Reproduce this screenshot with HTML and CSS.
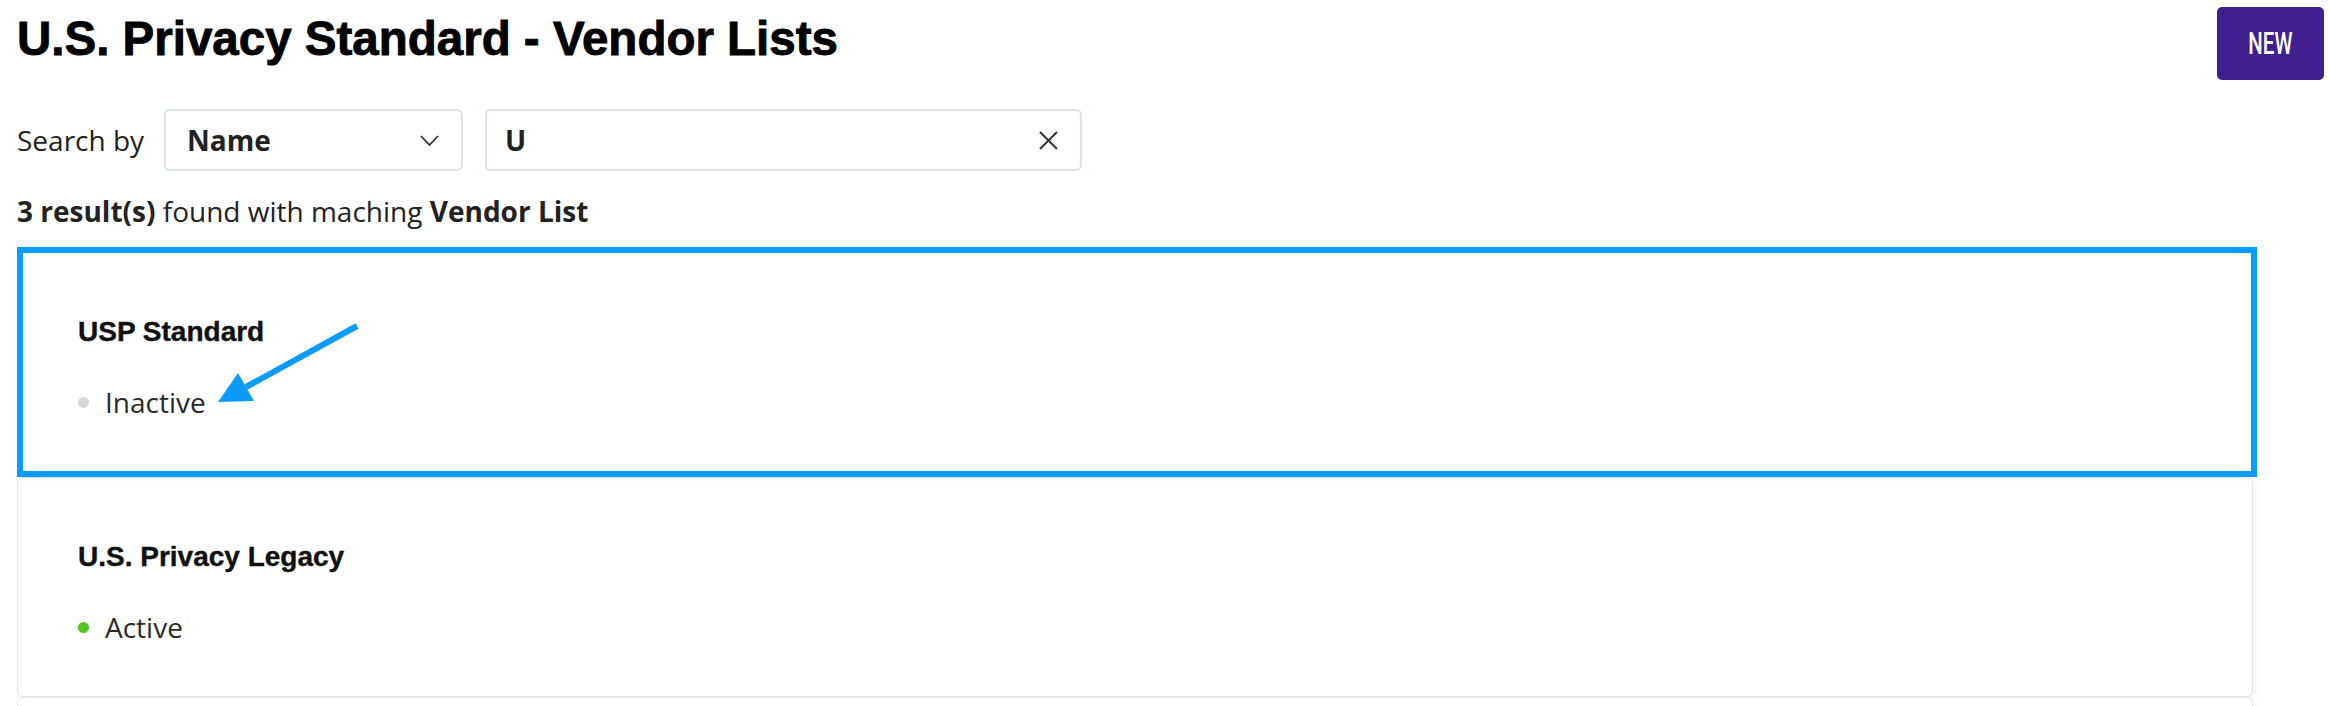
FILE: index.html
```
<!DOCTYPE html>
<html lang="en">
<head>
<meta charset="UTF-8">
<meta name="viewport" content="width=device-width, initial-scale=1.0">
<title>U.S. Privacy Standard - Vendor Lists</title>
<link rel="stylesheet" href="styles.css">
</head>
<body>
<div class="page">
  <div class="header">
    <h1 class="title">U.S. Privacy Standard - Vendor Lists</h1>
    <button class="btn-new"><span>NEW</span></button>
  </div>

  <div class="search-row">
    <span class="search-label">Search by</span>
    <div class="select-box">
      <span class="select-value">Name</span>
      <svg class="chevron" width="19" height="11" viewBox="0 0 19 11"><path d="M1 1 L9.5 10 L18 1" fill="none" stroke="#333" stroke-width="1.8"/></svg>
    </div>
    <div class="search-input">
      <span class="input-value">U</span>
      <svg class="clear" width="21" height="21" viewBox="0 0 21 21"><path d="M2 2 L19 19 M19 2 L2 19" fill="none" stroke="#333" stroke-width="2"/></svg>
    </div>
  </div>

  <p class="results"><b>3 result(s)</b> found with maching <b>Vendor List</b></p>

  <div class="list">
    <div class="card card-selected">
      <h3 class="card-title">USP Standard</h3>
      <div class="status"><span class="dot dot-inactive"></span>Inactive</div>
      <!-- annotation arrow -->
      <svg class="arrow" width="400" height="230" viewBox="0 0 400 230">
        <line x1="340" y1="79" x2="229" y2="140" stroke="#0b9bfd" stroke-width="6"/>
        <polygon points="201,155 237,154 221,126" fill="#0b9bfd"/>
      </svg>
    </div>
    <div class="card">
      <h3 class="card-title">U.S. Privacy Legacy</h3>
      <div class="status"><span class="dot dot-active"></span>Active</div>
    </div>
    <div class="card card-empty"></div>
  </div>
</div>
</body>
</html>
```

FILE: styles.css
```
body, html {
  margin: 0;
  padding: 0;
  background: #fff;
  overflow: hidden;
}
body {
  font-family: "Open Sans", "Liberation Sans", sans-serif;
  color: #222;
}
.page {
  padding: 0 6px 0 17px;
}
.header {
  display: flex;
  justify-content: space-between;
  align-items: flex-start;
}
.title {
  margin: 11px 0 0;
  font-family: "Liberation Sans", Arial, sans-serif;
  font-weight: 700;
  font-size: 47.5px;
  line-height: 56px;
  color: #000;
  -webkit-text-stroke: 0.9px #000; /* heavier, like the extrabold original */
}
.btn-new {
  margin-top: 7px;
  width: 107px;
  height: 73px;
  padding: 0;
  background-color: #411f8e;
  border: none;
  border-radius: 5px;
  color: white;
  font-family: Roboto, sans-serif;
  font-weight: 500;
  font-size: 31px;
  display: flex;
  align-items: center;
  justify-content: center;
}
.btn-new span {
  display: inline-block;
  transform: scaleX(0.66);
}

.search-row {
  display: flex;
  align-items: center;
  margin-top: 29px;
}
.search-label {
  font-size: 28px;
  line-height: 38px;
  margin-right: 20px;
}
.select-box, .search-input {
  box-sizing: border-box;
  height: 62px;
  border: 2px solid #dbe3eb;
  border-radius: 6px;
  display: flex;
  align-items: center;
  justify-content: space-between;
  font-size: 28px;
  font-weight: 700;
  color: #222;
}
.select-box {
  width: 299px;
  padding: 0 22px 0 21px;
}
.search-input {
  width: 597px;
  margin-left: 22px;
  padding: 0 21px 0 18px;
}

.results {
  margin: 21px 0 17px;
  font-size: 28px;
  line-height: 38px;
}

.list {
  margin: 0 71px 0 0;
}
.card {
  position: relative;
  border: 1px solid #e2e5eb;
  border-radius: 6px;
  padding: 63px 0 50px 60px;
  box-shadow: 3px 2px 6px rgba(0, 0, 0, 0.04);
  background: #fff;
}
.card-selected {
  border: 6px solid #0b9bfd;
  border-radius: 0;
  padding-left: 55px;
  margin-right: -4px;
  z-index: 1;
}
.card-empty {
  height: 120px;
  padding: 0;
}
.card-title {
  margin: 0 0 35px;
  font-family: "Liberation Sans", Arial, sans-serif;
  font-weight: 700;
  font-size: 28px;
  line-height: 32px;
  color: #111;
  -webkit-text-stroke: 0.4px #111;
}
.status {
  display: flex;
  align-items: center;
  gap: 16px;
  font-size: 28px;
  line-height: 38px;
  color: #2a2a2a;
}
.dot {
  width: 11px;
  height: 11px;
  border-radius: 50%;
}
.dot-inactive {
  background-color: #d9d9d9;
}
.dot-active {
  background-color: #56c31f;
}
.arrow {
  position: absolute;
  left: -6px;
  top: -6px;
  pointer-events: none;
}
```
